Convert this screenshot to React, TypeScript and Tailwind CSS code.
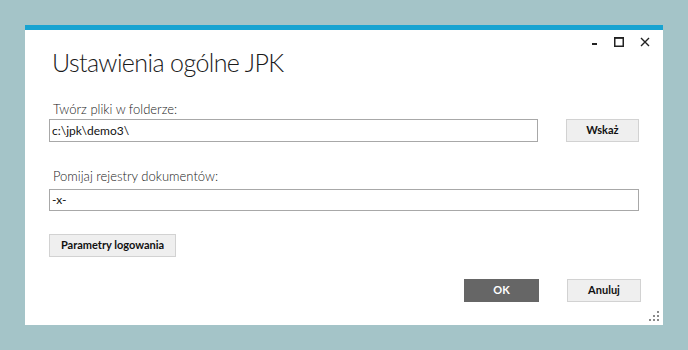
export default function App() {
  return (
    <div className="w-[688px] h-[350px] bg-[#a4c4c8] pt-[25px] pl-[25px] font-['Lato','Liberation_Sans',sans-serif]">
      <div className="relative w-[638px] h-[300px] bg-white border-t-[5px] border-[#17a3d1] flex flex-col">
        {/* window controls */}
        <div className="absolute top-[7px] right-[13px] flex items-center gap-[14px]">
          <svg width="10" height="10" viewBox="0 0 10 10">
            <rect x="2" y="6" width="5" height="2" fill="#222" />
          </svg>
          <svg width="10" height="10" viewBox="0 0 10 10">
            <rect x="0.75" y="0.75" width="8.5" height="8.5" fill="none" stroke="#222" strokeWidth="1.5" />
            <rect x="0.75" y="0.75" width="8.5" height="1" fill="#222" />
          </svg>
          <svg width="10" height="10" viewBox="0 0 10 10" className="ml-[2px]">
            <path d="M1 1 L9 9 M9 1 L1 9" stroke="#222" strokeWidth="1.4" />
          </svg>
        </div>

        <div className="pl-[24px] pr-[24px] pt-[17px] flex flex-col">
          <h1 className="ml-[3px] text-[25px] leading-[31px] tracking-[-0.6px] font-light text-[#1a1a1a]">Ustawienia ogólne JPK</h1>

          <label className="mt-[22px] ml-[4px] text-[13px] leading-[18px] font-light text-[#222]">Twórz pliki w folderze:</label>
          <div className="mt-[1px] flex items-center gap-[28px]">
            <div className="w-[489px] h-[23px] border border-[#a8a8a8] flex items-center px-[2px] text-[12px] text-[#111]">
              c:\jpk\demo3\
            </div>
            <button className="w-[73px] h-[23px] bg-[#efefef] border border-[#d2d2d2] text-[11px] font-bold text-[#111]">
              Wskaż
            </button>
          </div>

          <label className="mt-[25px] ml-[4px] text-[13px] leading-[18px] font-light text-[#222]">Pomijaj rejestry dokumentów:</label>
          <div className="mt-[4px] w-[590px] h-[22px] border border-[#a8a8a8] flex items-center px-[2px] text-[12px] text-[#111]">
            -x-
          </div>

          <button className="mt-[23px] w-[127px] h-[23px] bg-[#efefef] border border-[#d2d2d2] text-[11px] font-bold text-[#111]">
            Parametry logowania
          </button>

          <div className="mt-[22px] mr-[-2px] flex justify-end gap-[28px]">
            <button className="w-[75px] h-[23px] bg-[#666666] text-[11px] font-bold text-white">OK</button>
            <button className="w-[74px] h-[23px] bg-[#efefef] border border-[#d2d2d2] text-[11px] font-bold text-[#111]">
              Anuluj
            </button>
          </div>
        </div>

        {/* resize grip */}
        <div className="absolute right-[4px] bottom-[4px]">
          <svg width="10" height="10" viewBox="0 0 10 10">
            <rect x="8" y="0" width="2" height="2" fill="#8a8a8a" />
            <rect x="4" y="4" width="2" height="2" fill="#8a8a8a" />
            <rect x="8" y="4" width="2" height="2" fill="#8a8a8a" />
            <rect x="0" y="8" width="2" height="2" fill="#8a8a8a" />
            <rect x="4" y="8" width="2" height="2" fill="#8a8a8a" />
            <rect x="8" y="8" width="2" height="2" fill="#8a8a8a" />
          </svg>
        </div>
      </div>
    </div>
  );
}
